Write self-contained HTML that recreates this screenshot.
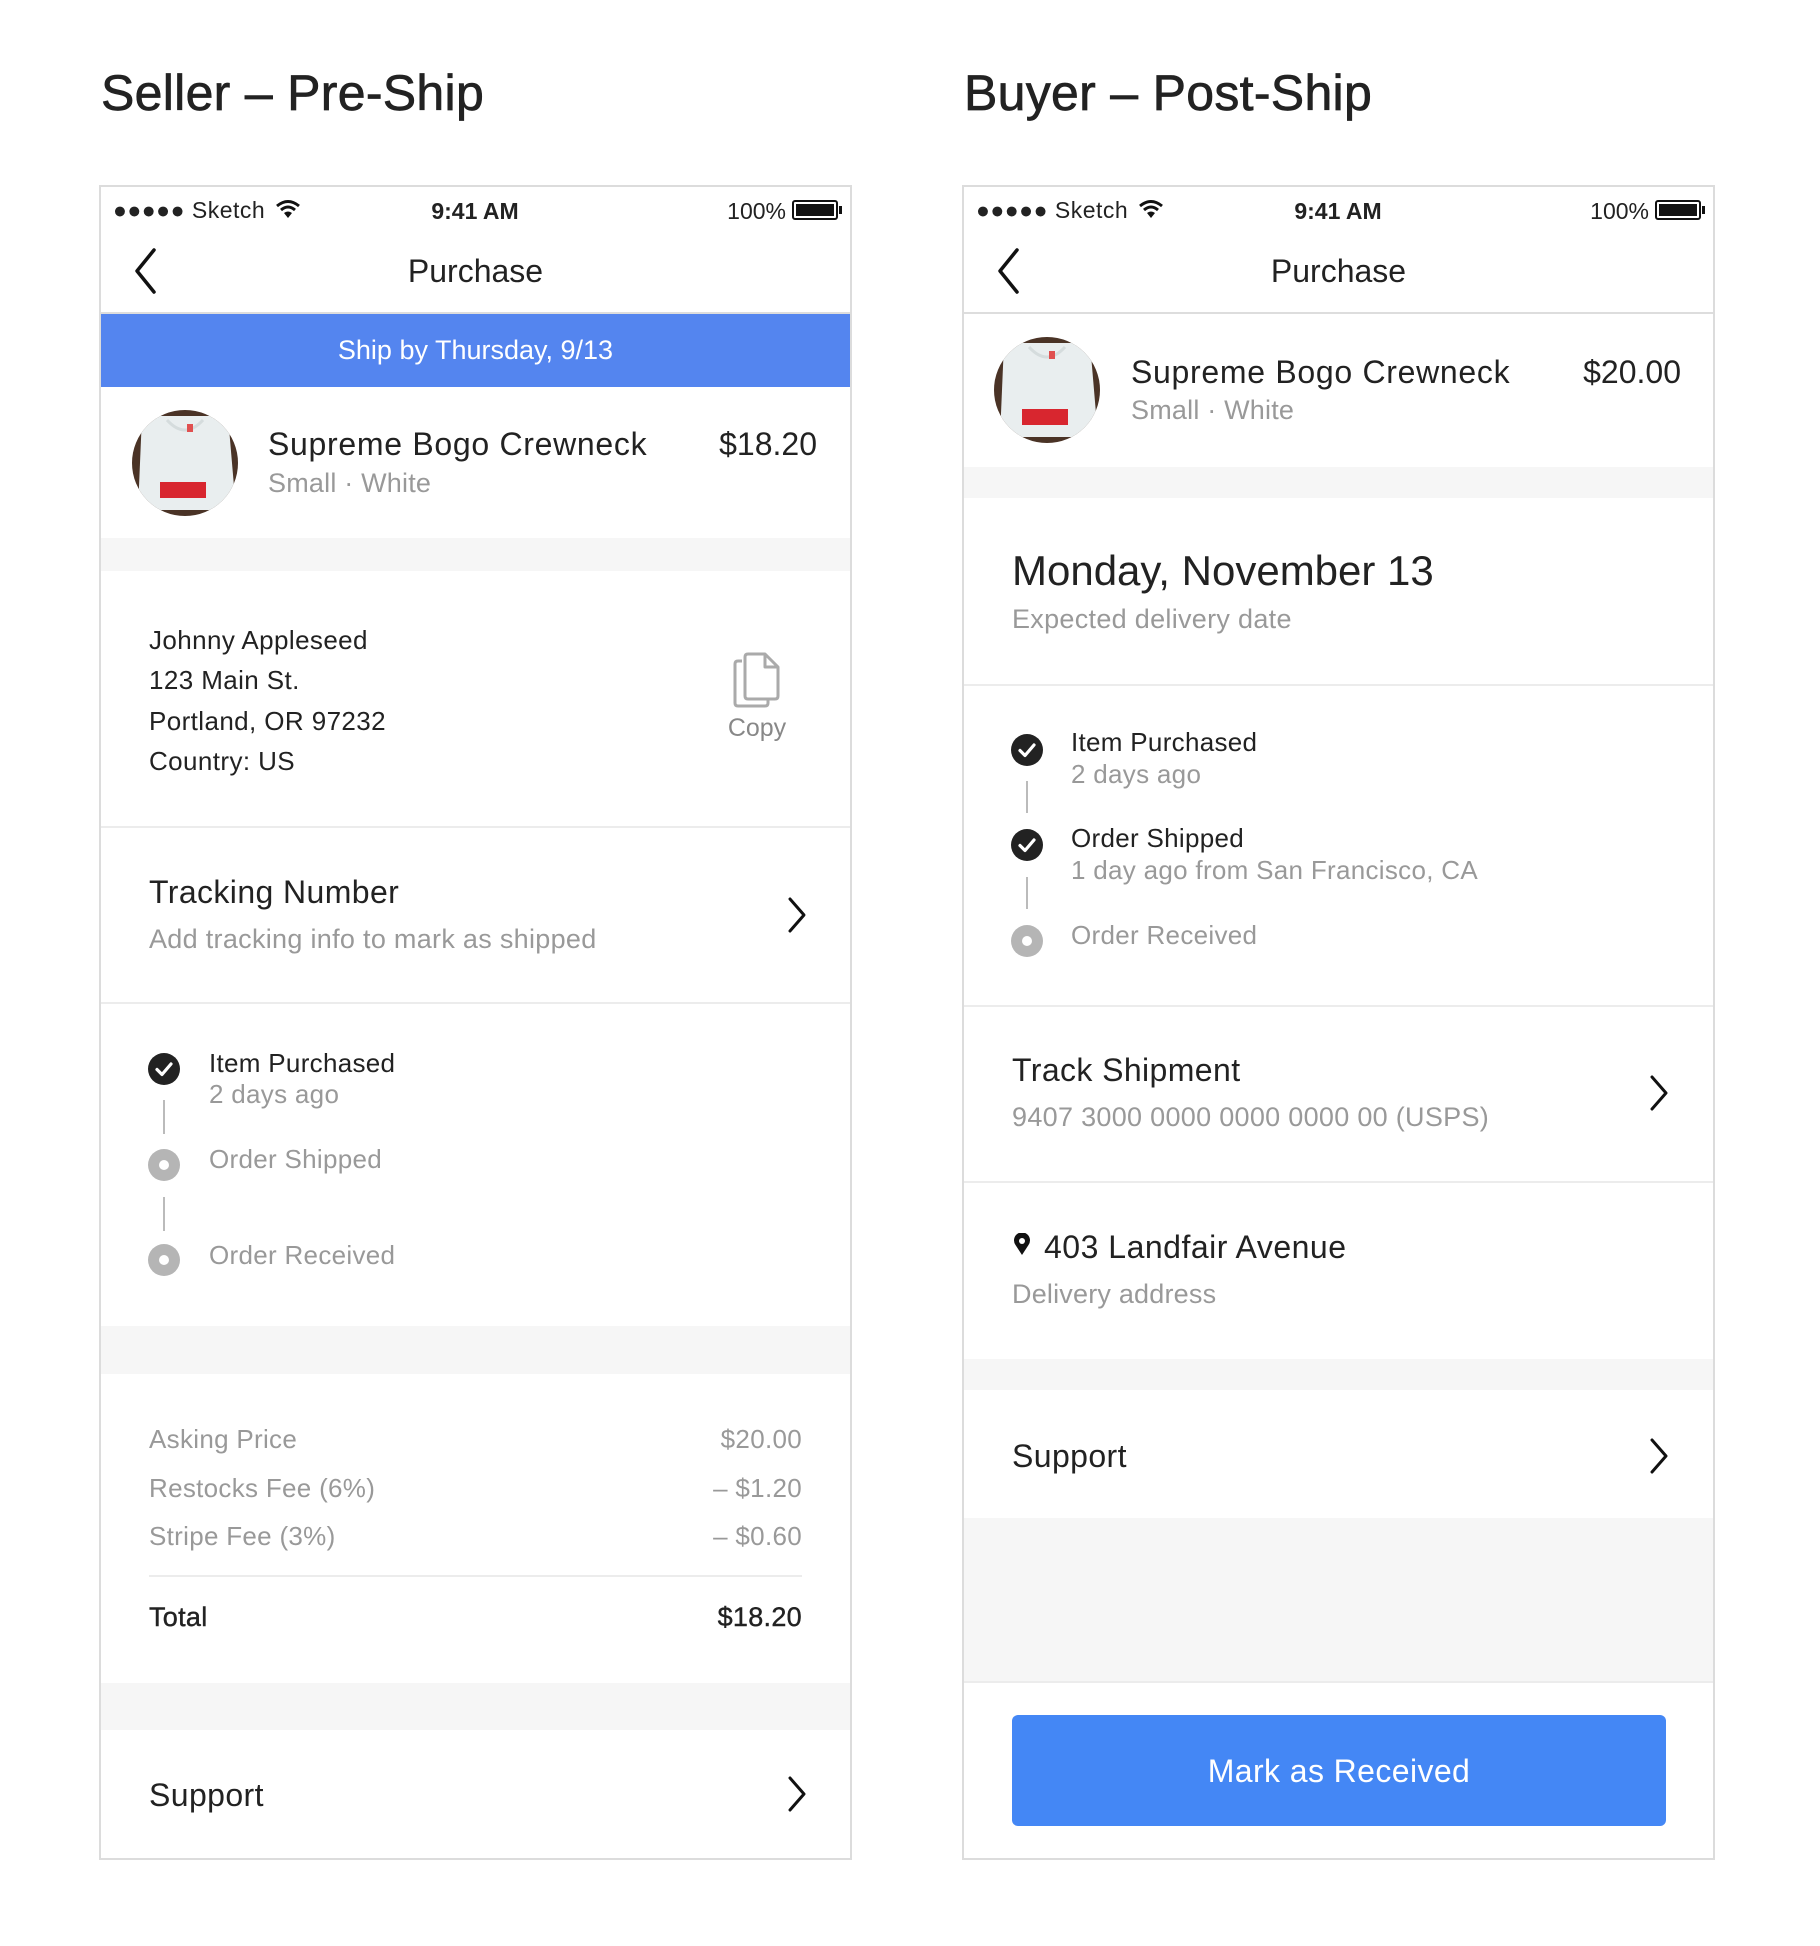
<!DOCTYPE html>
<html><head><meta charset="utf-8">
<style>
*{margin:0;padding:0;box-sizing:border-box}
body{width:1820px;height:1946px;background:#fff;position:relative;overflow:hidden;font-family:"Liberation Sans",sans-serif;color:#222}
.a{position:absolute}
.t{position:absolute;white-space:nowrap;line-height:1}
.g{color:#999}
.frame{position:absolute;top:185px;width:753px;height:1675px;border:2px solid #dcdcdc}
.gray{position:absolute;background:#f6f6f6}
.hl{position:absolute;height:2px;background:#ececec}
.r{text-align:right}
</style></head><body>

<div class="t" style="left:101px;top:68px;font-size:50px;-webkit-text-stroke:0.7px #222;letter-spacing:0.3px">Seller – Pre-Ship</div>
<div class="t" style="left:964px;top:68px;font-size:50px;-webkit-text-stroke:0.7px #222;letter-spacing:0.3px">Buyer – Post-Ship</div>

<!-- ========== PHONE 1 ========== -->
<div class="frame" style="left:99px"></div>
<div class="t" style="left:113px;top:199px;font-size:23px;letter-spacing:0.5px">●●●●● Sketch</div>
<svg class="a" style="left:275px;top:198px" width="26" height="22" viewBox="0 0 26 22"><path d="M2 8 Q13 -1 24 8" fill="none" stroke="#111" stroke-width="3"/><path d="M6 12 Q13 6 20 12" fill="none" stroke="#111" stroke-width="3"/><path d="M13 20 L9 15 Q13 12 17 15 Z" fill="#111"/></svg>
<div class="t" style="left:375px;width:200px;text-align:center;top:200px;font-size:23px;font-weight:bold">9:41 AM</div>
<div class="t r" style="left:680px;width:106px;top:200px;font-size:23px">100%</div>
<div class="a" style="left:792px;top:200px;width:46px;height:20px;border:2px solid #111;border-radius:3px;padding:2px"><div style="background:#111;width:100%;height:100%"></div></div>
<div class="a" style="left:839px;top:206px;width:3px;height:8px;background:#111"></div>
<svg class="a" style="left:130px;top:247px" width="30" height="48"><path d="M24 3 L7 24 L24 45" fill="none" stroke="#111" stroke-width="3.5" stroke-linecap="round" stroke-linejoin="round"/></svg>
<div class="t" style="left:101px;width:749px;text-align:center;top:255px;font-size:32px">Purchase</div>
<div class="a" style="left:101px;top:312px;width:749px;height:2px;background:#ddd"></div>
<div class="a" style="left:101px;top:314px;width:749px;height:73px;background:#5485ef"></div>
<div class="t" style="left:101px;width:749px;text-align:center;top:337px;font-size:27px;color:#fff">Ship by Thursday, 9/13</div>

<svg class="a" style="left:132px;top:410px" width="106" height="106" viewBox="0 0 106 106"><defs><clipPath id="c1"><circle cx="53" cy="53" r="53"/></clipPath></defs><g clip-path="url(#c1)"><rect width="106" height="106" fill="#4a3326"/><path d="M10 6 L96 6 L104 100 L6 100 Z" fill="#e9eeef"/><path d="M35 10 Q53 30 71 10" fill="none" stroke="#d5dcdd" stroke-width="3"/><rect x="28" y="72" width="46" height="16" fill="#d8262f"/><rect x="55" y="14" width="6" height="8" fill="#e05050"/></g></svg>
<div class="t" style="left:268px;top:428px;font-size:32px;letter-spacing:0.7px">Supreme Bogo Crewneck</div>
<div class="t g" style="left:268px;top:470px;font-size:27px;letter-spacing:0.2px">Small · White</div>
<div class="t r" style="left:617px;width:200px;top:428px;font-size:32px">$18.20</div>
<div class="gray" style="left:101px;top:538px;width:749px;height:33px"></div>

<div class="t" style="left:149px;top:627px;font-size:26px;letter-spacing:0.4px">Johnny Appleseed</div>
<div class="t" style="left:149px;top:667px;font-size:26px;letter-spacing:0.4px">123 Main St.</div>
<div class="t" style="left:149px;top:708px;font-size:26px;letter-spacing:0.4px">Portland, OR 97232</div>
<div class="t" style="left:149px;top:748px;font-size:26px;letter-spacing:0.4px">Country: US</div>
<svg class="a" style="left:732px;top:651px" width="52" height="60" viewBox="0 0 52 60"><path d="M10 10 H6 Q3 10 3 13 V52 Q3 55 6 55 H33 Q36 55 36 52 V48" fill="none" stroke="#aaa" stroke-width="3"/><path d="M13 6 Q13 3 16 3 H33 L46 16 V45 Q46 48 43 48 H16 Q13 48 13 45 Z" fill="none" stroke="#aaa" stroke-width="3" stroke-linejoin="round"/><path d="M33 3 V16 H46" fill="none" stroke="#aaa" stroke-width="3" stroke-linejoin="round"/></svg>
<div class="t" style="left:707px;width:100px;text-align:center;top:716px;font-size:25px;color:#888">Copy</div>
<div class="hl" style="left:101px;top:826px;width:749px"></div>

<div class="t" style="left:149px;top:876px;font-size:32px;letter-spacing:0.4px">Tracking Number</div>
<div class="t g" style="left:149px;top:926px;font-size:27px;letter-spacing:0.3px">Add tracking info to mark as shipped</div>
<svg class="a" style="left:786px;top:896px" width="22" height="38"><path d="M4 3 L18 19 L4 35" fill="none" stroke="#111" stroke-width="3" stroke-linecap="round" stroke-linejoin="round"/></svg>
<div class="hl" style="left:101px;top:1002px;width:749px"></div>

<svg class="a" style="left:148px;top:1053px" width="32" height="32"><circle cx="16" cy="16" r="16" fill="#222"/><path d="M9 16.5 L14 21.5 L23 11" fill="none" stroke="#fff" stroke-width="3.2" stroke-linecap="round" stroke-linejoin="round"/></svg>
<div class="a" style="left:163px;top:1100px;width:2px;height:34px;background:#bbb"></div>
<svg class="a" style="left:148px;top:1149px" width="32" height="32"><circle cx="16" cy="16" r="16" fill="#b5b5b5"/><circle cx="16" cy="16" r="5" fill="#fff"/></svg>
<div class="a" style="left:163px;top:1197px;width:2px;height:34px;background:#bbb"></div>
<svg class="a" style="left:148px;top:1244px" width="32" height="32"><circle cx="16" cy="16" r="16" fill="#b5b5b5"/><circle cx="16" cy="16" r="5" fill="#fff"/></svg>
<div class="t" style="left:209px;top:1050px;font-size:26px;letter-spacing:0.3px">Item Purchased</div>
<div class="t g" style="left:209px;top:1081px;font-size:26px;letter-spacing:0.3px">2 days ago</div>
<div class="t g" style="left:209px;top:1146px;font-size:26px;letter-spacing:0.3px">Order Shipped</div>
<div class="t g" style="left:209px;top:1242px;font-size:26px;letter-spacing:0.3px">Order Received</div>
<div class="gray" style="left:101px;top:1326px;width:749px;height:48px"></div>

<div class="t g" style="left:149px;top:1426px;font-size:26px;letter-spacing:0.3px">Asking Price</div>
<div class="t g" style="left:149px;top:1475px;font-size:26px;letter-spacing:0.3px">Restocks Fee (6%)</div>
<div class="t g" style="left:149px;top:1523px;font-size:26px;letter-spacing:0.3px">Stripe Fee (3%)</div>
<div class="t g r" style="left:602px;width:200px;top:1426px;font-size:26px;letter-spacing:0.3px">$20.00</div>
<div class="t g r" style="left:602px;width:200px;top:1475px;font-size:26px;letter-spacing:0.3px">– $1.20</div>
<div class="t g r" style="left:602px;width:200px;top:1523px;font-size:26px;letter-spacing:0.3px">– $0.60</div>
<div class="hl" style="left:149px;top:1575px;width:653px"></div>
<div class="t" style="left:149px;top:1604px;font-size:27px;letter-spacing:0.3px;-webkit-text-stroke:0.4px #222">Total</div>
<div class="t r" style="left:602px;width:200px;top:1604px;font-size:27px;letter-spacing:0.3px;-webkit-text-stroke:0.4px #222">$18.20</div>
<div class="gray" style="left:101px;top:1683px;width:749px;height:47px"></div>
<div class="t" style="left:149px;top:1779px;font-size:32px;letter-spacing:0.4px">Support</div>
<svg class="a" style="left:786px;top:1775px" width="22" height="38"><path d="M4 3 L18 19 L4 35" fill="none" stroke="#111" stroke-width="3" stroke-linecap="round" stroke-linejoin="round"/></svg>

<!-- ========== PHONE 2 ========== -->
<div class="frame" style="left:962px"></div>
<div class="t" style="left:976px;top:199px;font-size:23px;letter-spacing:0.5px">●●●●● Sketch</div>
<svg class="a" style="left:1138px;top:198px" width="26" height="22" viewBox="0 0 26 22"><path d="M2 8 Q13 -1 24 8" fill="none" stroke="#111" stroke-width="3"/><path d="M6 12 Q13 6 20 12" fill="none" stroke="#111" stroke-width="3"/><path d="M13 20 L9 15 Q13 12 17 15 Z" fill="#111"/></svg>
<div class="t" style="left:1238px;width:200px;text-align:center;top:200px;font-size:23px;font-weight:bold">9:41 AM</div>
<div class="t r" style="left:1543px;width:106px;top:200px;font-size:23px">100%</div>
<div class="a" style="left:1655px;top:200px;width:46px;height:20px;border:2px solid #111;border-radius:3px;padding:2px"><div style="background:#111;width:100%;height:100%"></div></div>
<div class="a" style="left:1702px;top:206px;width:3px;height:8px;background:#111"></div>
<svg class="a" style="left:993px;top:247px" width="30" height="48"><path d="M24 3 L7 24 L24 45" fill="none" stroke="#111" stroke-width="3.5" stroke-linecap="round" stroke-linejoin="round"/></svg>
<div class="t" style="left:964px;width:749px;text-align:center;top:255px;font-size:32px">Purchase</div>
<div class="a" style="left:964px;top:312px;width:749px;height:2px;background:#ddd"></div>

<svg class="a" style="left:994px;top:337px" width="106" height="106" viewBox="0 0 106 106"><defs><clipPath id="c2"><circle cx="53" cy="53" r="53"/></clipPath></defs><g clip-path="url(#c2)"><rect width="106" height="106" fill="#4a3326"/><path d="M10 6 L96 6 L104 100 L6 100 Z" fill="#e9eeef"/><path d="M35 10 Q53 30 71 10" fill="none" stroke="#d5dcdd" stroke-width="3"/><rect x="28" y="72" width="46" height="16" fill="#d8262f"/><rect x="55" y="14" width="6" height="8" fill="#e05050"/></g></svg>
<div class="t" style="left:1131px;top:356px;font-size:32px;letter-spacing:0.7px">Supreme Bogo Crewneck</div>
<div class="t g" style="left:1131px;top:397px;font-size:27px;letter-spacing:0.2px">Small · White</div>
<div class="t r" style="left:1481px;width:200px;top:356px;font-size:32px">$20.00</div>
<div class="gray" style="left:964px;top:467px;width:749px;height:31px"></div>

<div class="t" style="left:1012px;top:550px;font-size:42px;letter-spacing:0px">Monday, November 13</div>
<div class="t g" style="left:1012px;top:606px;font-size:27px;letter-spacing:0.3px">Expected delivery date</div>
<div class="hl" style="left:964px;top:684px;width:749px"></div>

<svg class="a" style="left:1011px;top:734px" width="32" height="32"><circle cx="16" cy="16" r="16" fill="#222"/><path d="M9 16.5 L14 21.5 L23 11" fill="none" stroke="#fff" stroke-width="3.2" stroke-linecap="round" stroke-linejoin="round"/></svg>
<div class="a" style="left:1026px;top:781px;width:2px;height:32px;background:#bbb"></div>
<svg class="a" style="left:1011px;top:829px" width="32" height="32"><circle cx="16" cy="16" r="16" fill="#222"/><path d="M9 16.5 L14 21.5 L23 11" fill="none" stroke="#fff" stroke-width="3.2" stroke-linecap="round" stroke-linejoin="round"/></svg>
<div class="a" style="left:1026px;top:877px;width:2px;height:32px;background:#bbb"></div>
<svg class="a" style="left:1011px;top:925px" width="32" height="32"><circle cx="16" cy="16" r="16" fill="#b5b5b5"/><circle cx="16" cy="16" r="5" fill="#fff"/></svg>
<div class="t" style="left:1071px;top:729px;font-size:26px;letter-spacing:0.3px">Item Purchased</div>
<div class="t g" style="left:1071px;top:761px;font-size:26px;letter-spacing:0.3px">2 days ago</div>
<div class="t" style="left:1071px;top:825px;font-size:26px;letter-spacing:0.3px">Order Shipped</div>
<div class="t g" style="left:1071px;top:857px;font-size:26px;letter-spacing:0.3px">1 day ago from San Francisco, CA</div>
<div class="t g" style="left:1071px;top:922px;font-size:26px;letter-spacing:0.3px">Order Received</div>
<div class="hl" style="left:964px;top:1005px;width:749px"></div>

<div class="t" style="left:1012px;top:1054px;font-size:32px;letter-spacing:0.4px">Track Shipment</div>
<div class="t g" style="left:1012px;top:1104px;font-size:27px;letter-spacing:0.3px">9407 3000 0000 0000 0000 00 (USPS)</div>
<svg class="a" style="left:1648px;top:1074px" width="22" height="38"><path d="M4 3 L18 19 L4 35" fill="none" stroke="#111" stroke-width="3" stroke-linecap="round" stroke-linejoin="round"/></svg>
<div class="hl" style="left:964px;top:1181px;width:749px"></div>

<svg class="a" style="left:1013px;top:1233px" width="18" height="23" viewBox="0 0 18 23"><path d="M9 22 L2.5 12 A8 8 0 1 1 15.5 12 Z" fill="#111"/><circle cx="9" cy="8" r="3" fill="#fff"/></svg>
<div class="t" style="left:1044px;top:1231px;font-size:32px;letter-spacing:0.5px">403 Landfair Avenue</div>
<div class="t g" style="left:1012px;top:1281px;font-size:27px;letter-spacing:0.2px">Delivery address</div>
<div class="gray" style="left:964px;top:1359px;width:749px;height:31px"></div>
<div class="t" style="left:1012px;top:1440px;font-size:32px;letter-spacing:0.4px">Support</div>
<svg class="a" style="left:1648px;top:1437px" width="22" height="38"><path d="M4 3 L18 19 L4 35" fill="none" stroke="#111" stroke-width="3" stroke-linecap="round" stroke-linejoin="round"/></svg>
<div class="gray" style="left:964px;top:1518px;width:749px;height:164px"></div>
<div class="hl" style="left:964px;top:1681px;width:749px"></div>
<div class="a" style="left:1012px;top:1715px;width:654px;height:111px;background:#4487f5;border-radius:6px"></div>
<div class="t" style="left:1012px;width:654px;text-align:center;top:1755px;font-size:32px;color:#fff;letter-spacing:0.4px">Mark as Received</div>
</body></html>
